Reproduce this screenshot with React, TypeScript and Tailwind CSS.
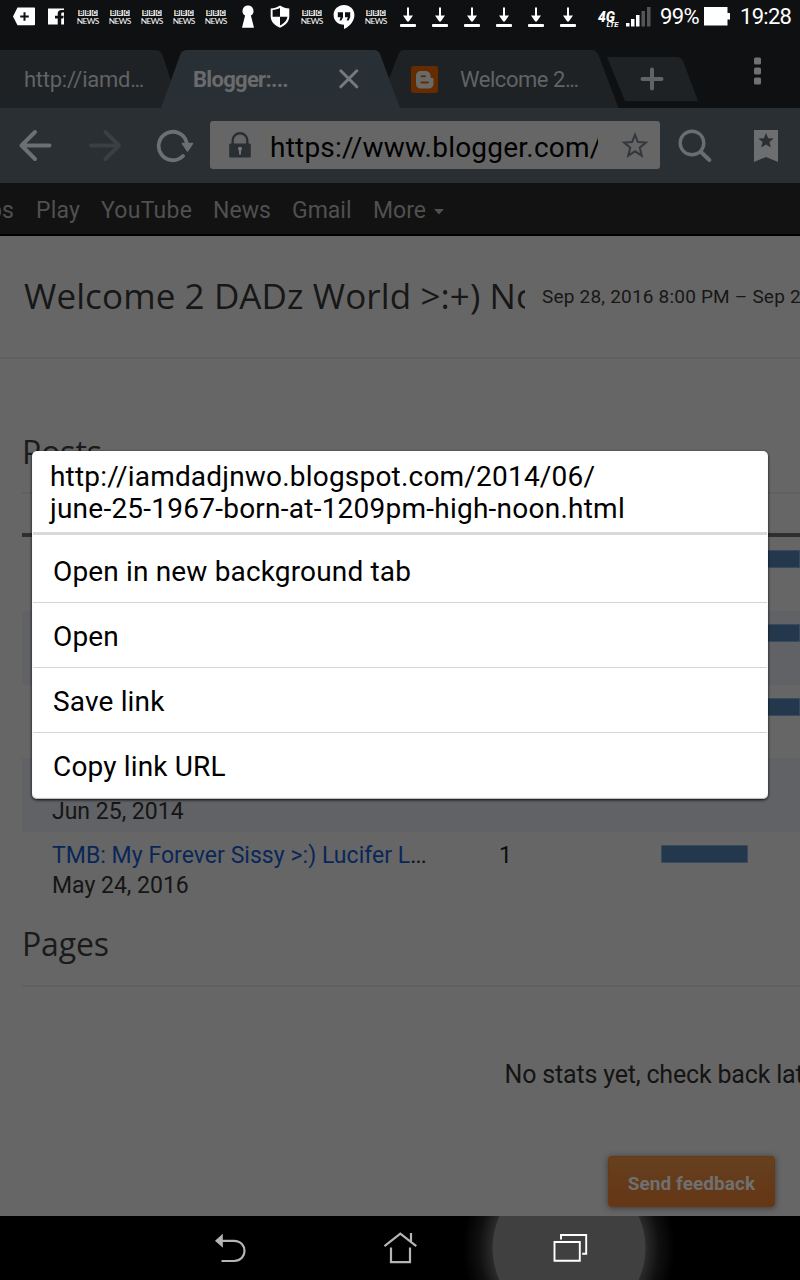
import type { ReactNode } from "react";

function Cell({ children }: { children: ReactNode }) {
  return (
    <svg viewBox="0 0 32 32" className="h-8 w-8 shrink-0" fill="#fff">
      {children}
    </svg>
  );
}

function AddTagIcon() {
  return (
    <Cell>
      <path d="M9.500 7.500H26c.6 0 1 .4 1 1v16c0 .5-.4.800-1 .8H9.500L5 16.400z" />
      <path d="M16.500 12.200v8.600M12.200 16.500h8.600" stroke="#0f1012" strokeWidth="2" />
    </Cell>
  );
}

function FacebookIcon() {
  return (
    <Cell>
      <path d="M8 8.500h16V24.600H21.200V18.600h2l.5-2.800h-2.500v-1.600c0-1.100.4-1.600 1.400-1.600H24V10h-2.200c-2.900 0-4.100 1.500-4.100 3.900v1.900h-2.700v2.800h2.700v6H8z" />
    </Cell>
  );
}

function BbcIcon() {
  return (
    <Cell>
      {["B", "B", "C"].map((c, i) => (
        <g key={i}>
          <rect x={6.2 + i * 6.7} y="10" width="6.100" height="6" fill="#ddd" />
          <text x={9.25 + i * 6.7} y="15.300" textAnchor="middle" fontSize="6.500" fontWeight="700" fill="#111" className="font-[Roboto]">
            {c}
          </text>
        </g>
      ))}
      <text x="4.800" y="24.200" fontSize="8.400" textLength="22.400" className="font-[Lato]">
        NEWS
      </text>
    </Cell>
  );
}

function KeyholeIcon() {
  return (
    <Cell>
      <path d="M16 5.500a5.400 5.400 0 0 0-2.900 10L10 27.800h12L18.900 15.500a5.400 5.400 0 0 0-2.900-10z" />
    </Cell>
  );
}

function ShieldIcon() {
  return (
    <Cell>
      <path d="M16 5.500c3 2 6 2.800 9.300 3v8c0 5-4 9-9.300 11.300C10.700 25.500 6.700 21.500 6.700 16.500v-8C10 8.300 13 7.500 16 5.500z" />
      <path d="M16 8v8.800H8.600V10C11.500 9.700 14 9 16 8zM16 16.800h7.400c-.3 3.600-3.400 6.800-7.400 8.700z" fill="#0f1012" />
    </Cell>
  );
}

function HangoutsIcon() {
  return (
    <Cell>
      <path d="M16 5C10.200 5 5.600 9.300 5.600 14.900S10 24.700 16 24.700V29c6-3 10.400-8 10.400-14.100C26.400 9.300 21.800 5 16 5z" />
      <path d="M9.800 12.200H15v5l-1.600 3.200h-2l1.300-3.200H9.800zM17 12.200h5.200v5l-1.600 3.200h-2l1.300-3.200H17z" fill="#0f1012" />
    </Cell>
  );
}

function DownloadIcon() {
  return (
    <Cell>
      <path d="M15 7.500h2v8h4L16.800 21.500h-1.600L11 15.500h4z" />
      <rect x="8" y="24" width="16" height="3" rx="1" />
    </Cell>
  );
}

function StatusBar() {
  return (
    <div className="flex h-[50px] items-start pl-2">
      <AddTagIcon />
      <FacebookIcon />
      <BbcIcon />
      <BbcIcon />
      <BbcIcon />
      <BbcIcon />
      <BbcIcon />
      <KeyholeIcon />
      <ShieldIcon />
      <BbcIcon />
      <HangoutsIcon />
      <BbcIcon />
      <DownloadIcon />
      <DownloadIcon />
      <DownloadIcon />
      <DownloadIcon />
      <DownloadIcon />
      <DownloadIcon />
      <svg viewBox="584 0 72 32" className="h-8 w-[72px] shrink-0 font-[Roboto]" fill="#fff">
        <text x="598" y="21.500" fontSize="14.500" fontWeight="900" fontStyle="italic" textLength="17" lengthAdjust="spacingAndGlyphs">
          4G
        </text>
        <text x="606.500" y="27" fontSize="6.500" fontWeight="700" fontStyle="italic" textLength="12" lengthAdjust="spacingAndGlyphs">
          LTE
        </text>
        <rect x="626" y="23" width="3.500" height="3.500" />
        <rect x="631" y="19" width="3.500" height="7.500" />
        <rect x="636" y="15" width="3.500" height="11.500" />
        <rect x="641.500" y="11" width="3.500" height="15.500" fill="#555" />
        <rect x="647" y="7" width="3.500" height="19.500" fill="#555" />
      </svg>
      <span className="ml-1 w-[44px] text-[22px] leading-[33px] tracking-[-0.6px] text-white">99%</span>
      <svg viewBox="0 0 27 19" className="mt-[7px] h-[19px] w-[27px] shrink-0" fill="#fff">
        <path d="M0 0h23.500v6H26v6.500h-2.500V18.500H0z" />
      </svg>
      <span className="ml-[9px] text-[22px] leading-[33px] tracking-[-0.7px] text-white">19:28</span>
    </div>
  );
}

function TabStrip() {
  return (
    <div className="relative h-[58px]">
      <svg viewBox="0 50 800 58" className="absolute inset-0 h-[58px] w-[800px]">
        <path d="M0 50H155Q160.500 50 162.500 55L180 108H0z" fill="#1e2224" />
        <path d="M378 108L398.500 54Q400.500 50 404 50H591Q596.500 50 598.500 55L618.500 108z" fill="#1e2224" />
        <path d="M607 57H677Q681 57 683 61L698 101H625Z" fill="#1e2224" />
        <path d="M161 108L180.500 54Q182.500 50 187 50H374Q378 50 380 54L400 108z" fill="#293035" />
      </svg>
      <div className="relative flex h-full items-center text-[22px] leading-[58px] text-[#626365]">
        <span className="w-[169px] pl-6 pt-[2px] tracking-[-0.25px]">
          http://iamd<span className="tracking-[-1.500px]">...</span>
        </span>
        <span className="w-[145px] pl-6 pt-[2px] font-bold tracking-[-0.7px] text-[#6a6b6c]">Blogger:...</span>
        <svg viewBox="0 0 20 20" className="ml-[25px] h-5 w-5" stroke="#77797b" strokeWidth="3" strokeLinecap="round">
          <path d="M1.800 1.800l16 16M17.800 1.800l-16 16" />
        </svg>
        <svg viewBox="0 0 27 27" className="ml-[52px] h-[27px] w-[27px]">
          <rect width="27" height="27" rx="2.500" fill="#662c00" />
          <path
            fill="#696a6a"
            fillRule="evenodd"
            d="M10 5h4c3.300 0 5.500 2 5.500 4.500 0 2 .5 2.600 1.800 2.600.8 0 1.200.5 1.200 1.300v4c0 3-2 5-5 5H10c-3 0-5-2-5-5V10c0-3 2-5 5-5zm.5 4.300a1 1 0 0 0 0 2h3.500a1 1 0 0 0 0-2zm0 6.200a1 1 0 0 0 0 2h6.500a1 1 0 0 0 0-2z"
          />
        </svg>
        <span className="ml-[22px] w-[147px] pt-[2px] tracking-[-0.45px]">
          Welcome 2<span className="tracking-[-1.600px]">...</span>
        </span>
        <svg viewBox="0 0 24 24" className="ml-[33px] h-6 w-6" stroke="#626365" strokeWidth="4" strokeLinecap="round">
          <path d="M12 2.500v19M2.500 12h19" />
        </svg>
        <svg viewBox="0 0 8 28" className="mb-[16px] ml-[90px] h-7 w-2" fill="#707173">
          <rect x="0" y=".5" width="7" height="7" rx="1.500" />
          <rect x="0" y="10.500" width="7" height="7" rx="1.500" />
          <rect x="0" y="20.500" width="7" height="7" rx="1.500" />
        </svg>
      </div>
    </div>
  );
}

function Toolbar() {
  return (
    <div className="flex h-[75px] items-center bg-[#292f33] pb-px">
      <svg viewBox="0 0 34 34" className="ml-[18px] h-[34px] w-[34px]" fill="none" stroke="#6d6f71" strokeWidth="4" strokeLinecap="round" strokeLinejoin="round">
        <path d="M17 4L3.500 17.500 17 31M4 17.500h27.500" />
      </svg>
      <svg viewBox="0 0 34 34" className="ml-[36px] h-[34px] w-[34px]" fill="none" stroke="#3a3f43" strokeWidth="4" strokeLinecap="round" strokeLinejoin="round">
        <path d="M17.500 4L31 17.500 17.500 31M30 17.500H3" />
      </svg>
      <svg viewBox="0 0 38 36" className="ml-[34px] h-9 w-[38px]" fill="none" stroke="#6d6f71" strokeWidth="3.800" strokeLinecap="round">
        <path d="M30.500 15A14.200 14.200 0 1 0 27 29" />
        <path d="M26.500 16.500h10L31.500 24z" fill="#6d6f71" stroke="#6d6f71" strokeWidth="1.500" strokeLinejoin="round" />
      </svg>
      <div className="ml-[16px] flex h-12 w-[450px] items-center rounded-[3px] bg-[#666]">
        <svg viewBox="0 0 22 26" className="ml-[19px] h-[26px] w-[22px]">
          <path d="M3.700 12V7.500a7.300 7 0 0 1 14.600 0V12" transform="translate(0 .8)" fill="none" stroke="#292f33" strokeWidth="2.400" />
          <rect x=".2" y="11.500" width="21.600" height="14" rx="1" fill="#292f33" />
          <circle cx="11" cy="16.700" r="2" fill="#777" />
          <rect x="10" y="17" width="2" height="5.500" fill="#777" />
        </svg>
        <div className="ml-[19px] w-[328px] overflow-hidden whitespace-nowrap pt-[5px] text-[28px] leading-[43px] tracking-[0.22px] text-black">
          https://www.blogger.com/
        </div>
        <svg viewBox="0 0 28 28" className="ml-[23px] h-7 w-7" fill="none" stroke="#33383e" strokeWidth="2">
          <path d="M14 3.700l2.900 7.400 8 .5-6.200 5 2.100 8.100-6.800-4.400-6.800 4.400 2.100-8.100-6.200-5 8-.5z" />
        </svg>
      </div>
      <svg viewBox="0 0 34 34" className="ml-[18px] h-[34px] w-[34px]" fill="none" stroke="#6b6d6e" strokeWidth="3.400" strokeLinecap="round">
        <circle cx="14" cy="15" r="11.800" />
        <path d="M23 24l8.300 8" strokeWidth="4" />
      </svg>
      <svg viewBox="0 0 24 34" className="ml-[42px] h-[34px] w-6">
        <path d="M0 2h24v32L12 29 0 34z" fill="#6c6e6f" />
        <path d="M12 5l2.100 5.300 5.600.3-4.300 3.500 1.500 5.500-4.900-3.100-4.900 3.100 1.500-5.500-4.300-3.500 5.600-.3z" fill="#292f33" />
      </svg>
    </div>
  );
}

function GoogleBar() {
  return (
    <div className="flex h-[53px] items-center overflow-hidden whitespace-nowrap border-b-2 border-black bg-[#121212] pt-[4px] text-[23px] leading-[47px] tracking-[0.15px] text-[#505050]">
      <span className="flex w-[14px] shrink-0 justify-end">ps</span>
      <span className="ml-[22px] w-[65px]">Play</span>
      <span className="w-[112px] tracking-[0.25px]">YouTube</span>
      <span className="w-[79px] tracking-[0.05px]">News</span>
      <span className="w-[81px] tracking-normal">Gmail</span>
      <span className="tracking-[0px]">More</span>
      <svg viewBox="0 0 10 6" className="ml-[8px] mt-[2px] h-[6px] w-[10px]" fill="#505050">
        <path d="M0 0h10L5 5.500z" />
      </svg>
    </div>
  );
}

type Row = { title?: string; date?: string; views?: string; bar: number };

const rows: Row[] = [
  { bar: 300 },
  { bar: 240 },
  { bar: 180 },
  { date: "Jun 25, 2014", bar: 0 },
  { title: "TMB: My Forever Sissy >:) Lucifer L", date: "May 24, 2016", views: "1", bar: 87 },
];

function PostRow({ row, shaded }: { row: Row; shaded: boolean }) {
  return (
    <div className={shaded ? "flex h-[73.8px] bg-[#616265] pt-[7px]" : "flex h-[73.8px] pt-[7px]"}>
      <div className="w-[477px] pl-[30px] pt-[2px] text-[23px] leading-[30px] text-[#151515]">
        <div className="h-[30px] tracking-[0.04px] text-[#0a2659]">
          {row.title}
          {row.title && <span className="tracking-[-0.8px] text-[#111]">...</span>}
        </div>
        <div>{row.date}</div>
      </div>
      <div className="w-[162px] pt-[2px] text-[23px] leading-[30px] text-[#0d0d0d]">{row.views}</div>
      <div className="mt-[6px] h-[18px] shrink-0 bg-[#24384d] outline-1 -outline-offset-1 outline-[#3a4a5c]" style={{ width: row.bar }} />
    </div>
  );
}

function StatsPage() {
  return (
    <div className="flex h-[980px] flex-col overflow-hidden bg-[#666]">
      <div className="flex h-[123px] shrink-0 items-center whitespace-nowrap border-b-2 border-[#606060] pl-6 text-[#171717]">
        <div className="w-[501px] shrink-0 overflow-hidden pb-[2px] font-['Open_Sans'] text-[35px] leading-[117px] tracking-[0.1px]">
          Welcome 2 DADz World &gt;:+) Not
        </div>
        <div className="ml-[17px] text-[19px] leading-[119px] tracking-[0.2px]">Sep 28, 2016 8:00 PM – Sep 28, 2016</div>
      </div>
      <div className="ml-[22px] flex shrink-0 flex-col">
        <h2 className="mt-[69px] h-[66px] border-b-2 border-[#606060] font-['Open_Sans'] text-[32px] leading-[48px] tracking-[-0.1px] text-[#1a1a1a]">Posts</h2>
        <div className="mt-[39px] border-t-[4px] border-[#2d302f]">
          {rows.map((row, i) => (
            <PostRow key={i} row={row} shaded={i % 2 === 1} />
          ))}
        </div>
        <h2 className="mt-[14px] h-[67px] border-b-2 border-[#606060] font-['Open_Sans'] text-[32px] leading-[48px] tracking-[-0.15px] text-[#1a1a1a]">Pages</h2>
        <div className="mt-[68px] whitespace-nowrap pl-[482.500px] text-[25px] leading-10 tracking-[-0.18px] text-[#141414]">No stats yet, check back later</div>
      </div>
      <button className="ml-[608px] mt-[61px] h-[51px] w-[167px] shrink-0 rounded-[3px] border border-[#6b3815] bg-linear-to-b from-[#65401f] to-[#653615] pt-[5px] text-[19px] font-bold tracking-[0.05px] text-[#707070] shadow-[0_1px_6px_rgba(0,0,0,0.45)]">
        Send feedback
      </button>
    </div>
  );
}

function ContextMenu() {
  const items = ["Open in new background tab", "Open", "Save link", "Copy link URL"];
  return (
    <div className="absolute left-[32px] top-[451px] h-[348px] w-[736px] rounded-[5px] bg-white text-black shadow-[0_1px_3px_rgba(0,0,0,0.9),inset_0_-1px_1px_#bbb]">
      <div className="mx-px h-[84px] border-b-[3px] border-[#d9d9d9] pl-[17px] pt-[10px] text-[28px] leading-8 tracking-[0.24px]">
        <div className="tracking-[0.2px]">http://iamdadjnwo.blogspot.com/2014/06/</div>
        <div>june-25-1967-born-at-1209pm-high-noon.html</div>
      </div>
      <div className="mx-px divide-y divide-[#d5d5d5] pt-[3px] text-[28px] leading-[60px] tracking-[0.16px]">
        {items.map((item) => (
          <div key={item} className="h-[65px] pl-5 pt-1">
            {item}
          </div>
        ))}
      </div>
    </div>
  );
}

function SystemBar() {
  return (
    <div className="h-16 bg-black">
      <svg viewBox="0 1216 800 64" className="h-16 w-[800px]" fill="none">
        <defs>
          <radialGradient id="halo" cx="569" cy="1248" r="106" gradientUnits="userSpaceOnUse">
            <stop offset=".7" stopColor="#303030" />
            <stop offset=".85" stopColor="#101010" />
            <stop offset="1" stopColor="#000" />
          </radialGradient>
        </defs>
        <circle cx="569" cy="1248" r="106" fill="url(#halo)" />
        <circle cx="569" cy="1248" r="76.500" fill="#404040" />
        <path d="M222 1240.800h12c14 0 14 20.200 0 20.200h-12.500" stroke="#b5b5b5" strokeWidth="2.200" />
        <path d="M215 1240.800l7.800-7v14z" fill="#b5b5b5" />
        <path d="M384.500 1246.200l15.800-12.600 16 12.600M411 1233v8.500M391 1247.500v14.700h19v-14.700" stroke="#b5b5b5" strokeWidth="2.200" />
        <path d="M554.500 1242h25.300v18.800h-25.300zM561 1239.500v-4.500h25.200v18.700h-4" stroke="#fff" strokeWidth="1.900" />
      </svg>
    </div>
  );
}

export default function App() {
  return (
    <div className="relative h-[1280px] w-[800px] overflow-hidden bg-[#0f1012] font-[Roboto,sans-serif]">
      <StatusBar />
      <TabStrip />
      <Toolbar />
      <GoogleBar />
      <StatsPage />
      <SystemBar />
      <ContextMenu />
    </div>
  );
}
